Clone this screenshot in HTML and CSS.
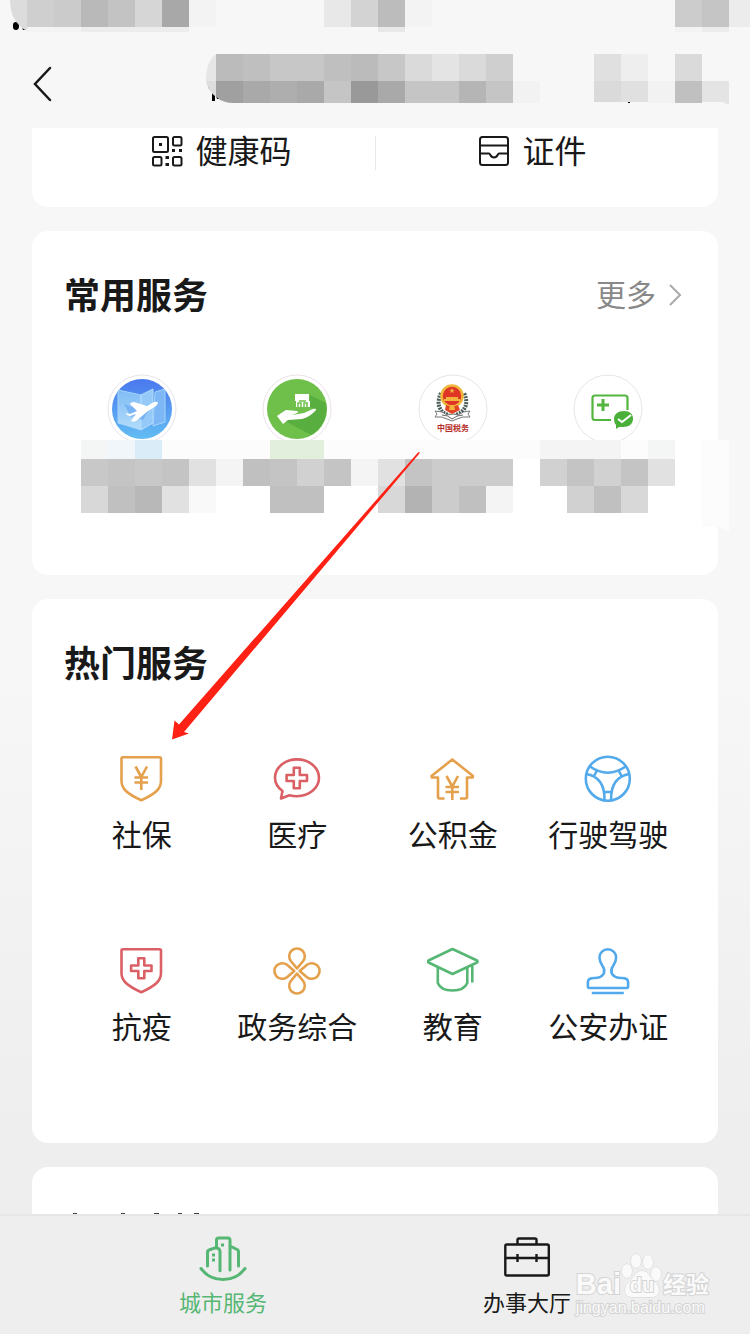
FILE: index.html
```html
<!DOCTYPE html>
<html lang="zh-CN">
<head>
    <meta charset="UTF-8">
    <meta name="viewport" content="width=device-width, initial-scale=1.0">
    <title>城市服务</title>
    <link rel="stylesheet" href="styles.css">
</head>
<body>
    <header class="header">
        <button class="back" type="button" aria-label="返回">
            <svg width="20" height="36" viewBox="0 0 20 36"><path d="M18 2L3 18l15 16"/></svg>
        </button>
        <svg class="mosaic header-mosaic" width="750" height="110" viewBox="0 0 750 110" aria-hidden="true">
            <path fill="#000" d="M13 25q0-3 3-3t3 4-3 4-3-3zM22 27l4 3h-3zM208 86l3 4-2-1zM212 92h3v9h-3zM216 96l4 3h-3zM628 102h2v1h-2z"/>
            <path fill="#dcdcdc" d="M10 0h17v31Q10 22 10 0z"/>
            <path fill="#cfcfcf" d="M27 0h27v27H27z"/>
            <path fill="#cbcbcb" d="M54 0h27v27H54z"/>
            <path fill="#b9b9b9" d="M81 0h27v27H81z"/>
            <path fill="#c3c3c3" d="M108 0h27v27h-27z"/>
            <path fill="#d6d6d6" d="M135 0h27v27h-27z"/>
            <path fill="#a8a8a8" d="M162 0h27v27h-27z"/>
            <path fill="#f3f3f3" d="M189 0h27v27h-27zM405 0h27v27h-27zM27 27h54v5H27zM675 27h27v5h-27z"/>
            <path fill="#e8e8e8" d="M324 0h27v27h-27zM378 27h27v5h-27z"/>
            <path fill="#d3d3d3" d="M351 0h27v27h-27z"/>
            <path fill="#bcbcbc" d="M378 0h27v27h-27z"/>
            <path fill="#cccccc" d="M675 0h27v27h-27z"/>
            <path fill="#c5c5c5" d="M702 0h27v27h-27z"/>
            <path fill="#ececec" d="M729 0h21v27h-21zM81 27h108v5H81zM702 27h27v5h-27z"/>
            <path fill="#e6e6e6" d="M216 54v27h-10q0-20 10-27z"/>
            <path fill="#dddddd" d="M206 81h10v16q-8-6-10-16z"/>
            <path fill="#bbbbbb" d="M216 54h27v27h-27zM351 54h27v27h-27z"/>
            <path fill="#bfbfbf" d="M243 54h27v27h-27zM324 54h27v27h-27z"/>
            <path fill="#c7c7c7" d="M270 54h54v27h-54zM378 54h27v27h-27z"/>
            <path fill="#dadada" d="M405 54h27v27h-27zM459 54h27v27h-27zM675 54h27v27h-27zM594 81h27v21h-27z"/>
            <path fill="#e4e4e4" d="M432 54h27v27h-27zM702 81h27v23h-3l-3-2h-21z"/>
            <path fill="#cfcfcf" d="M486 54h27v27h-27z"/>
            <path fill="#e0e0e0" d="M594 54h27v27h-27zM621 81h27v21h-27z"/>
            <path fill="#eeeeee" d="M621 54h27v27h-27z"/>
            <path fill="#a0a0a0" d="M216 81h27v22h-9q-11 0-18-6z"/>
            <path fill="#a9a9a9" d="M243 81h27v22h-27zM297 81h27v22h-27zM378 81h27v22h-27z"/>
            <path fill="#aeaeae" d="M270 81h27v22h-27z"/>
            <path fill="#c5c5c5" d="M324 81h27v22h-27zM405 81h54v22h-54zM486 81h27v22h-27z"/>
            <path fill="#999999" d="M351 81h27v22h-27z"/>
            <path fill="#b5b5b5" d="M459 81h27v22h-27z"/>
            <path fill="#f2f2f2" d="M513 81h27v22h-27zM648 81h27v22h-27z"/>
            <path fill="#c0c0c0" d="M675 81h27v22h-27z"/>
        </svg>
    </header>

    <main class="content">
        <section class="card quick">
            <button class="quick-item" type="button">
                <svg width="32" height="32" viewBox="0 0 32 32">
                    <rect x="2" y="2" width="15" height="15" rx="1.500"/>
                    <rect x="22" y="2" width="8.500" height="8.500" rx="1.500"/>
                    <rect x="2" y="22" width="8.500" height="8.500" rx="1.500"/>
                    <rect x="22" y="22" width="8.500" height="8.500" rx="1.500"/>
                    <path class="solid" d="M8 8h3v3H8zM21 14h3v3h-3zM28 14h3v3h-3zM14.500 21h3.500v3h-3.500zM14.500 28h3.500v3h-3.500z"/>
                </svg>
                健康码
            </button>
            <button class="quick-item" type="button">
                <svg width="32" height="32" viewBox="0 0 32 32">
                    <rect x="2" y="2" width="28" height="28" rx="2.500"/>
                    <path d="M2 10.500h28M2 18.500h9c1.500 0 1 4 5 4s3.500-4 5-4h9"/>
                </svg>
                证件
            </button>
        </section>

        <section class="card common">
            <div class="card-head">
                <h2>常用服务</h2>
                <a class="more" href="#">更多
                    <svg width="14" height="24" viewBox="0 0 14 24"><path d="M2 2l10 10L2 22"/></svg>
                </a>
            </div>
            <div class="grid">
                <a class="logo" href="#" aria-label="出行">
                    <svg width="70" height="70" viewBox="0 0 70 70">
                        <defs>
                            <linearGradient id="sky" x1="0" y1="0" x2="0" y2="1"><stop offset="0" stop-color="#4a78ee"/><stop offset="1" stop-color="#63bdf3"/></linearGradient>
                            <linearGradient id="map" x1="0" y1="0" x2="0" y2="1"><stop offset="0" stop-color="#7fbcf5"/><stop offset="1" stop-color="#b3dcfb"/></linearGradient>
                            <clipPath id="round"><circle cx="35" cy="35" r="30"/></clipPath>
                        </defs>
                        <circle cx="35" cy="35" r="34" fill="#fff" stroke="#e8e4ec"/>
                        <circle cx="35" cy="35" r="30" fill="url(#sky)"/>
                        <g clip-path="url(#round)">
                            <path fill="url(#map)" stroke="#a4d4fb" d="M11 16l23 5v35l-23-7z"/>
                            <path fill="#94c9f8" stroke="#b5dcfd" d="M34 21l12-6v34l-12 7z"/>
                            <path fill="#7db7f5" stroke="#a4d4fb" d="M48 18l10-3v33l-12 4z"/>
                            <path fill="#4b8ff0" opacity=".4" d="M17 30l8 3 7-2 12 1-8 14-5-1 2-5-9 3z"/>
                        </g>
                        <path fill="#fff" d="M19 39l4 1 7-3-7-7q1-2 4-2l13 4 7-4q4-1 4 1-1 3-5 5l-5 3-12 10q-3 1-5 0l5-7-6 2q-4-1-4-3z"/>
                    </svg>
                </a>
                <a class="logo" href="#" aria-label="住房">
                    <svg width="70" height="70" viewBox="0 0 70 70">
                        <circle cx="35" cy="35" r="34" fill="#fff" stroke="#ece2ec"/>
                        <circle cx="35" cy="35" r="30" fill="#6fc04b"/>
                        <path fill="#58ae3e" d="M48 21l16 8a30 30 0 0 1-15 32L23 47l31-12-7-2z"/>
                        <path fill="#fff" d="M33 20h14v7h1v6H34v-6h-1z"/>
                        <path fill="none" stroke="#6fc04b" stroke-width="1.500" d="M36 33v-4h3v4M42 33v-4h3v4M37 27h7"/>
                        <path fill="#fff" d="M15 42q4-3 9-6l11 1q2 1 0 2l-5 2 12-2 9-4q4-1 3 1-6 7-14 9l-14 1-5 4z"/>
                    </svg>
                </a>
                <a class="logo" href="#" aria-label="税务">
                    <svg width="70" height="70" viewBox="0 0 70 70">
                        <circle cx="35" cy="35" r="34" fill="#fff" stroke="#e6e6e8"/>
                        <path fill="none" stroke="#4c5d5a" stroke-width="4" stroke-dasharray="2 1" d="M23 19q-6 13 3 20l8 4 8-4q10-7 4-20"/>
                        <path fill="#fff" stroke="#777" d="M17 37q8 0 12 4 6-2 11 0 5-4 12-4l-2 3 2 3q-8-1-13 2l-5 2-5-2q-5-3-12-2l2-3z"/>
                        <path fill="none" stroke="#666" d="M24 41q6 0 10 4 5-4 11-4"/>
                        <circle cx="34" cy="22" r="10.500" fill="#e03526" stroke="#efb83d" stroke-width="2.500"/>
                        <path fill="#f4b33d" d="M34 14l1 2h2l-2 1 1 2-2-1-2 1 1-2-2-1h2zM28 23h12v2h2v2H26v-2h2z"/>
                        <path fill="#e34524" d="M28 31l6 2 6-2 2 5-8 4-7-4z"/>
                        <path fill="#f4b33d" d="M32 31h4l1 5h-6z"/>
                        <text class="logo-text" x="19" y="57">中国税务</text>
                    </svg>
                </a>
                <a class="logo" href="#" aria-label="医保">
                    <svg width="70" height="70" viewBox="0 0 70 70">
                        <circle cx="35" cy="35" r="34" fill="#fff" stroke="#e6e6e8"/>
                        <path fill="none" stroke="#52b53e" stroke-width="2.200" d="M38 46H22q-2.500 0-2.500-2.500V24q0-2.500 2.500-2.500h30q2.500 0 2.500 2.500v12"/>
                        <path fill="none" stroke="#52b53e" stroke-width="3" d="M24 31h12M30 25v12"/>
                        <path fill="#4bb03a" d="M41 45c0-5 4-8 10-8s9 3 9 8-4 8-10 8h-4l-3 2v-4q-2-2-2-6z"/>
                        <path fill="none" stroke="#fff" stroke-width="2" d="M45 45l4 3 9-7"/>
                    </svg>
                </a>
            </div>
            <svg class="mosaic common-mosaic" width="660" height="93" viewBox="81 440 660 93" aria-hidden="true">
                <path fill="#fcfcfc" d="M81 440h594v19H81zM702 440h27v92l-9-5h-18z"/>
                <path fill="#f4f6f6" d="M81 440h27v19H81zM648 440h27v19h-27z"/>
                <path fill="#f4f4f4" d="M540 440h81v19h-81z"/>
                <path fill="#f0f6f9" d="M108 440h27v19h-27z"/>
                <path fill="#d9ecf7" d="M135 440h27v19h-27z"/>
                <path fill="#e2efdc" d="M270 440h54v19h-54z"/>
                <path fill="#c8c8c8" d="M81 459h27v27H81zM135 459h27v27h-27z"/>
                <path fill="#c4c4c4" d="M108 459h27v27h-27zM162 459h27v27h-27zM270 459h27v27h-27zM324 459h27v27h-27zM405 459h27v27h-27zM567 459h27v27h-27zM621 459h27v27h-27z"/>
                <path fill="#e1e1e1" d="M189 459h27v27h-27zM378 459h27v27h-27zM648 459h27v27h-27zM162 486h27v27h-27z"/>
                <path fill="#f4f4f4" d="M216 459h27v27h-27zM351 459h27v27h-27zM486 486h27v27h-27z"/>
                <path fill="#c0c0c0" d="M243 459h27v27h-27zM108 486h27v27h-27zM270 486h54v27h-54zM459 486h27v27h-27zM594 486h27v27h-27z"/>
                <path fill="#d1d1d1" d="M297 459h27v27h-27zM540 459h27v27h-27zM594 459h27v27h-27zM567 486h27v27h-27z"/>
                <path fill="#cccccc" d="M432 459h81v27h-81zM432 486h27v27h-27z"/>
                <path fill="#d8d8d8" d="M81 486h27v27H81zM378 486h27v27h-27zM621 486h27v27h-27z"/>
                <path fill="#b8b8b8" d="M135 486h27v27h-27z"/>
                <path fill="#f9f9f9" d="M189 486h27v27h-27z"/>
                <path fill="#b3b3b3" d="M405 486h27v27h-27z"/>
            </svg>
        </section>

        <section class="card hot">
            <div class="card-head">
                <h2>热门服务</h2>
            </div>
            <div class="grid">
                <a class="service orange" href="#">
                    <svg width="52" height="52" viewBox="0 0 52 52">
                        <path d="M7 4.300h36.500q1.500 0 1.500 1.500V28c0 8-6 13-19.700 19.300C11.500 41 5.500 36 5.500 28V5.800q0-1.500 1.500-1.500z"/>
                        <path d="M19.500 13.500l5.800 10.500L31 13.500M18.500 24.500H32M18.500 29.500H32M25.300 24v13"/>
                    </svg>
                    社保
                </a>
                <a class="service red" href="#">
                    <svg width="52" height="52" viewBox="0 0 52 52">
                        <path d="M11.500 38C6.500 34.500 4 29.500 4 24.800 4 14.600 13.800 6.400 26 6.400s22 8.200 22 18.400-9.800 18.400-22 18.400q-4 0-7.500-1L10 45.500z"/>
                        <path d="M22.800 14.800h6V22H36v6h-7.200v7.200h-6V28h-7.200v-6h7.200z"/>
                    </svg>
                    医疗
                </a>
                <a class="service orange" href="#">
                    <svg width="52" height="52" viewBox="0 0 52 52">
                        <path d="M17.500 45.500h-5q-1.500 0-1.500-1.500V24.500H5l-.5-1.500L25.300 6.500 46 23l-.5 1.500h-5.500V44q0 1.500-1.500 1.500H33"/>
                        <path d="M19.500 23l5.800 10.500L31 23M18.500 34H32M18.500 39H32M25.300 33.500V47"/>
                    </svg>
                    公积金
                </a>
                <a class="service blue" href="#">
                    <svg width="52" height="52" viewBox="0 0 52 52">
                        <circle cx="25.800" cy="25.700" r="22"/>
                        <path d="M8 13.500q17.800 12.500 35.600 0M4 21q19 3 18.500 26M47.600 21q-19 3-18.500 26M15 17.500l-3 5.500M36.600 17.500l3 5.500M22.500 39H29"/>
                    </svg>
                    行驶驾驶
                </a>
                <a class="service red" href="#">
                    <svg width="52" height="52" viewBox="0 0 52 52">
                        <path d="M7 4.300h36.500q1.500 0 1.500 1.500V28c0 8-6 13-19.700 19.300C11.500 41 5.500 36 5.500 28V5.800q0-1.500 1.500-1.500z"/>
                        <path d="M22.300 13.300h6v7.200h7.200v5.500h-7.200v7.200h-6V26h-7.200v-5.500h7.200z"/>
                    </svg>
                    抗疫
                </a>
                <a class="service orange" href="#">
                    <svg width="52" height="52" viewBox="0 0 52 52">
                        <path d="M26 23.300l-6.200-7.300a7.800 7.800 0 1 1 12.400 0z"/>
                        <path d="M28.700 26l7.300-6.200a7.800 7.800 0 1 1 0 12.400z"/>
                        <path d="M26 28.700l6.200 7.300a7.800 7.800 0 1 1-12.400 0z"/>
                        <path d="M23.300 26L16 32.200a7.800 7.800 0 1 1 0-12.400z"/>
                    </svg>
                    政务综合
                </a>
                <a class="service green" href="#">
                    <svg width="52" height="52" viewBox="0 0 52 52">
                        <path d="M25.500 4L50 15.500q1 1 0 2L25.500 29 1.500 17.500q-1-1 0-2zM10.800 22v16q3 7.500 14.700 7.500T40.300 38V22M45.300 20.500v17"/>
                    </svg>
                    教育
                </a>
                <a class="service blue" href="#">
                    <svg width="52" height="52" viewBox="0 0 52 52">
                        <path d="M22 28q1-4-1.500-7-3-4.500-3-8.500a8.300 8.300 0 0 1 16.600 0q0 4-3 8.500-2.500 3-1.500 7 2 5 10 5 6.500 0 6.500 4v4.500q0 1.500-1.500 1.500H7.400q-1.500 0-1.500-1.500V37q0-4 6.500-4 7.600 0 9.600-5zM9.800 48h32"/>
                    </svg>
                    公安办证
                </a>
            </div>
        </section>

        <section class="card next">
            <svg width="160" height="2" viewBox="0 0 160 2" aria-hidden="true"><path fill="#444" d="M9 1h4v1H9zM57 1h4v1h-4zM90 1h5v1h-5zM114 1h4v1h-4zM130 1h5v1h-5z"/></svg>
        </section>
    </main>

    <nav class="tabbar">
        <a class="tab active" href="#">
            <svg width="48" height="48" viewBox="0 0 48 48">
                <path d="M2 33.500q8 11 22 11t22-11M8.500 31V17q0-1.500 1.500-2l6-2.200q5 0 5 4v19M17.500 12.500V5q0-2 2-2h9.500q2 0 2 2v30M31 11l7 3.500q1.500.5 1.500 2V31"/>
                <path class="dot" d="M22 8.500h3v3h-3zM13 18.500h3v3h-3zM13 23.500h3v3h-3z"/>
            </svg>
            城市服务
        </a>
        <a class="tab" href="#">
            <svg width="48" height="48" viewBox="0 0 48 48">
                <rect x="2.300" y="9.500" width="43.500" height="31" rx="1.500"/>
                <path d="M14.500 9V5q0-1.500 1.500-1.500h16q1.500 0 1.500 1.500v4M2.300 23h43.500M14.500 19v8M33.500 19v8"/>
            </svg>
            办事大厅
        </a>
    </nav>

    <svg class="arrow" width="250" height="290" viewBox="171 451 250 290" aria-hidden="true">
        <path fill="#ff2113" d="M172 739.500l2.500-19 4.500 4L418 452.500l2-.5-1 2-235 278 5 1.500z"/>
    </svg>

    <div class="watermark">
        <div class="brand">
            <span class="bai">Bai</span>
            <span class="paw">
                <svg width="42" height="46" viewBox="0 0 42 46" aria-hidden="true">
                    <ellipse cx="6" cy="19" rx="5" ry="7"/>
                    <ellipse cx="15" cy="9" rx="5" ry="7"/>
                    <ellipse cx="27" cy="10" rx="5" ry="7"/>
                    <ellipse cx="35" cy="22" rx="5" ry="7"/>
                    <path d="M21 19c-7 0-8 7-13 11s-6 15 3 15h20c9 0 8-11 3-15s-6-11-13-11z"/>
                </svg>
                <b>du</b>
            </span>
            <span class="jingyan">经验</span>
        </div>
        <div class="site">jingyan.baidu.com</div>
    </div>
</body>
</html>
```

FILE: styles.css
```css
* {
    box-sizing: border-box;
}
body {
    position: relative;
    display: flex;
    flex-direction: column;
    height: 100vh;
    margin: 0;
    overflow: hidden;
    font-family: "Noto Sans CJK SC", sans-serif;
    color: #191919;
    background: linear-gradient(#f7f7f7 50%, #eee 85%);
}
svg {
    display: block;
    flex: none;
    fill: none;
}
a {
    color: inherit;
    text-decoration: none;
}
button {
    padding: 0;
    border: none;
    background: none;
    font: inherit;
    color: inherit;
    cursor: pointer;
}
.header {
    position: relative;
    flex: none;
    height: 128px;
    padding: 66px 32px 0;
}
.back svg {
    stroke: #191919;
    stroke-width: 2.5;
    stroke-linecap: round;
}
.mosaic {
    position: absolute;
    pointer-events: none;
}
.header-mosaic {
    top: 0;
    left: 0;
}
.content {
    flex: 1;
    min-height: 0;
    display: flex;
    flex-direction: column;
    gap: 24px;
    padding: 0 32px;
}
.card {
    flex: none;
    padding: 38px 32px 0;
    border-radius: 16px;
    background: #fff;
}
.quick {
    display: flex;
    padding: 0 32px 37px;
    border-radius: 0 0 16px 16px;
}
.quick-item {
    flex: 1;
    display: flex;
    justify-content: center;
    align-items: center;
    gap: 12px;
    height: 42px;
    padding-left: 4px;
    font-size: 32px;
    line-height: 42px;
}
.quick-item + .quick-item {
    background: linear-gradient(#e8e8e8, #e8e8e8) no-repeat left bottom / 1px 34px;
}
.quick-item svg {
    margin-top: 4px;
    stroke: #191919;
    stroke-width: 2;
}
.quick-item .solid {
    fill: #191919;
    stroke: none;
}
.card-head {
    display: flex;
    justify-content: space-between;
    align-items: center;
    height: 48px;
}
h2 {
    margin: 0;
    font-size: 36px;
    font-weight: bold;
    line-height: 48px;
}
.more {
    display: flex;
    align-items: center;
    gap: 12px;
    padding-right: 4px;
    font-size: 30px;
    line-height: 48px;
    color: #888;
}
.more svg {
    margin-top: 4px;
    stroke: #aaa;
    stroke-width: 2;
}
.grid {
    display: grid;
    grid-template-columns: repeat(4, 1fr);
    justify-items: center;
}
.common {
    position: relative;
    padding-bottom: 131px;
}
.common .grid {
    margin-top: 57px;
}
.logo-text {
    font-family: "Noto Sans CJK SC", sans-serif;
    font-size: 8px;
    font-weight: bold;
    fill: #b5302c;
}
.common-mosaic {
    top: 209px;
    left: 49px;
}
.hot {
    padding-bottom: 98px;
}
.hot .grid {
    margin-top: 68px;
    row-gap: 92px;
}
.service {
    display: flex;
    flex-direction: column;
    align-items: center;
    gap: 8px;
    font-size: 30px;
    line-height: 40px;
    white-space: nowrap;
}
.service svg {
    stroke-width: 2.6;
    stroke-linejoin: round;
}
.orange svg {
    stroke: #e5a04c;
}
.red svg {
    stroke: #da6065;
}
.blue svg {
    stroke: #52a9eb;
}
.green svg {
    stroke: #56b774;
}
.next {
    padding: 45px 32px 0;
    border-radius: 16px 16px 0 0;
}
.tabbar {
    flex: none;
    display: flex;
    height: 120px;
    padding: 0 71px;
    border-top: 2px solid #e6e6e6;
    background: #eee;
}
.tab {
    flex: 1;
    display: flex;
    flex-direction: column;
    align-items: center;
    gap: 3px;
    padding-top: 19px;
    font-size: 22px;
    line-height: 30px;
}
.tab svg {
    stroke: #191919;
    stroke-width: 2.4;
    stroke-linejoin: round;
}
.tab.active {
    color: #56b774;
}
.tab.active svg {
    stroke: #56b774;
    stroke-width: 3;
    stroke-linecap: round;
}
.tab .dot {
    fill: #56b774;
    stroke: none;
}
.arrow {
    position: absolute;
    top: 451px;
    left: 171px;
    pointer-events: none;
}
.watermark {
    position: absolute;
    right: 41px;
    bottom: 16px;
    color: #fafafa;
    -webkit-text-stroke: 2px #d4d4d4;
    paint-order: stroke fill;
    pointer-events: none;
}
.brand {
    display: flex;
    align-items: flex-end;
    height: 46px;
}
.bai {
    font: bold 29px/28px "Liberation Sans", sans-serif;
}
.paw {
    position: relative;
}
.paw svg {
    fill: #fafafa;
    stroke: #d4d4d4;
}
.paw b {
    position: absolute;
    left: 0;
    right: 0;
    bottom: 2px;
    text-align: center;
    font: bold 20px/22px "Liberation Sans", sans-serif;
}
.jingyan {
    font-size: 23px;
    font-weight: bold;
    line-height: 30px;
}
.site {
    font: 16px/20px "Liberation Sans", sans-serif;
}
```
